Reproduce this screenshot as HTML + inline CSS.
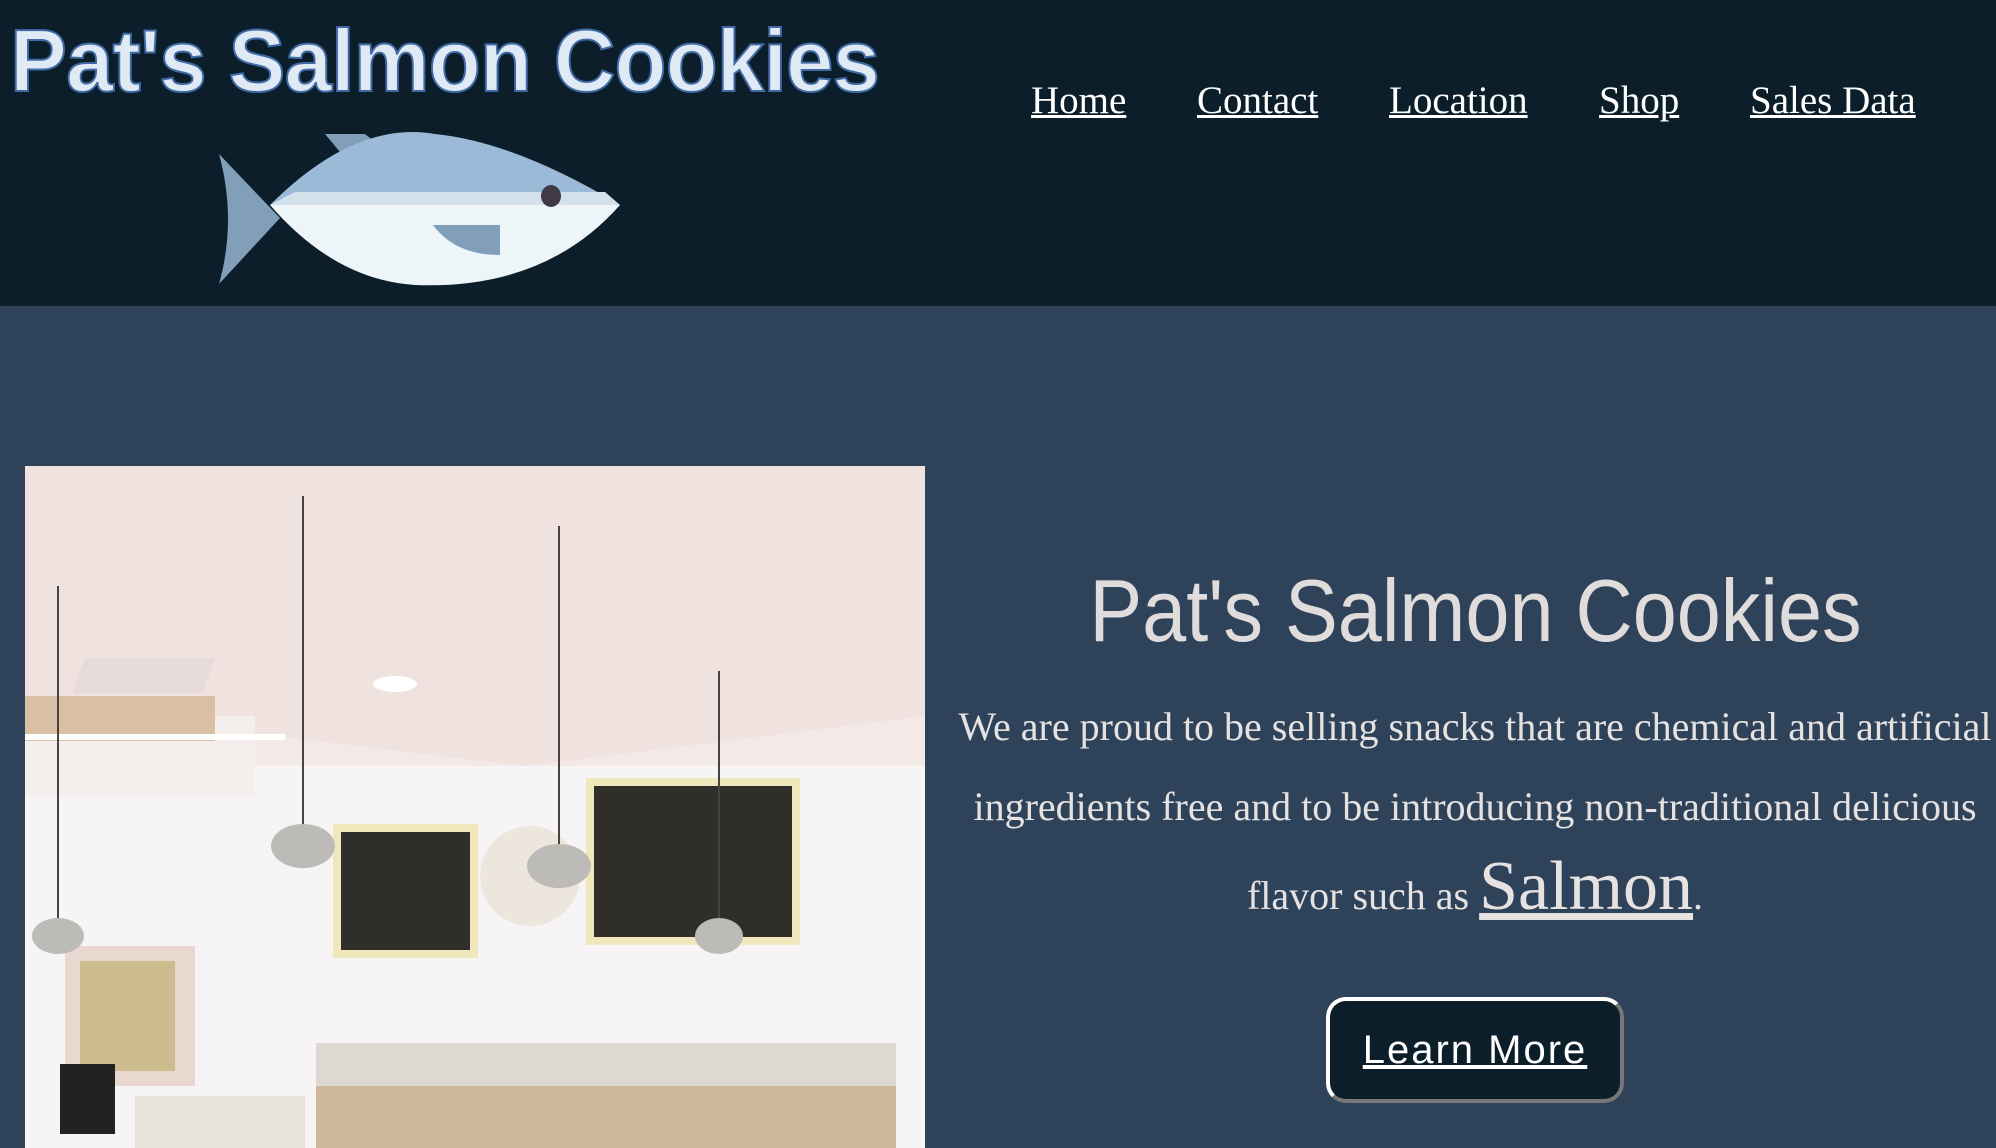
<!DOCTYPE html>
<html><head><style>
html,body{margin:0;padding:0}
body{width:1996px;height:1148px;overflow:hidden;background:#2e4259;position:relative;font-family:"Liberation Serif",serif}
header{position:absolute;left:0;top:0;width:1996px;height:306px;background:#0b1e2a}
.logo{position:absolute;left:10px;top:10px;font-family:"Liberation Sans",sans-serif;font-weight:bold;font-size:88px;color:#dfeaf5;-webkit-text-stroke:2px #3f6aa5;letter-spacing:-1px;white-space:nowrap;transform:scaleX(0.97);transform-origin:left}
nav a{position:absolute;top:78px;color:#fff;font-size:39px;text-decoration:underline;font-family:"Liberation Serif",serif}
h1{position:absolute;left:940px;width:1071px;top:560px;margin:0;text-align:center;font-family:"Liberation Sans",sans-serif;font-weight:normal;font-size:88px;color:#e1dcdc;transform:scaleX(0.9);white-space:nowrap}
p{position:absolute;left:900px;width:1150px;top:687px;margin:0;text-align:center;color:#e6e2e2;font-size:40px;line-height:80px;white-space:nowrap}
p a{color:#e6e2e2;font-size:70px;text-decoration:underline}
.btn{position:absolute;left:1326px;top:997px;width:298px;height:106px;box-sizing:border-box;background:#0b1e2a;border:4px solid #fff;border-right-color:#777;border-bottom-color:#777;border-radius:20px;color:#fff;font-family:"Liberation Sans",sans-serif;font-size:40px;text-align:center;line-height:98px;text-decoration:underline;letter-spacing:2px}
</style></head><body>
<header>
<div class="logo">Pat's Salmon Cookies</div>
<svg style="position:absolute;left:215px;top:130px" width="410" height="160" viewBox="0 0 410 160">
<polygon points="110,4 140,40 180,28 150,4" fill="#829fba"/>
<path d="M4,24 L65,88 L4,154 Q22,90 4,24Z" fill="#829fba"/>
<path d="M55,75 Q140,-10 220,4 Q300,12 405,75 Z" fill="#9bbad8"/>
<path d="M55,75 L405,75 Q330,160 200,155 Q120,150 55,75Z" fill="#eef5f9"/>
<path d="M55,75 L80,62 L390,62 L405,75Z" fill="#d3e1ea"/>
<ellipse cx="336" cy="66" rx="10" ry="11" fill="#3f3a45"/>
<path d="M218,95 L285,95 L285,125 Q240,125 218,95Z" fill="#829fba"/>
</svg>
<nav>
<a style="left:1031px">Home</a>
<a style="left:1197px">Contact</a>
<a style="left:1389px">Location</a>
<a style="left:1599px">Shop</a>
<a style="left:1750px">Sales Data</a>
</nav>
</header>
<svg style="position:absolute;left:25px;top:466px" width="900" height="682" viewBox="0 0 900 682">
<rect width="900" height="682" fill="#f3eae8"/>
<path d="M0,0 H900 V250 L500,300 L0,240Z" fill="#efe2df"/>
<rect x="0" y="300" width="900" height="382" fill="#f6f4f4"/>
<rect x="0" y="250" width="230" height="80" fill="#f4efec"/>
<rect x="0" y="230" width="190" height="45" fill="#d9bfa3"/>
<rect x="0" y="268" width="260" height="6" fill="#fff"/>
<rect x="308" y="358" width="145" height="134" fill="#f1e7bd"/>
<rect x="316" y="366" width="129" height="118" fill="#2f2e2b"/>
<rect x="561" y="312" width="214" height="167" fill="#f1e7bd"/>
<rect x="569" y="320" width="198" height="151" fill="#2f2e2b"/>
<circle cx="505" cy="410" r="50" fill="#ede6dd"/>
<rect x="40" y="480" width="130" height="140" fill="#e9d8d0"/>
<rect x="55" y="495" width="95" height="110" fill="#cdbc8e"/>
<g stroke="#444" stroke-width="2">
<line x1="33" y1="120" x2="33" y2="470"/><line x1="278" y1="30" x2="278" y2="380"/>
<line x1="534" y1="60" x2="534" y2="400"/><line x1="694" y1="205" x2="694" y2="470"/></g>
<g fill="#bdbbb8"><ellipse cx="33" cy="470" rx="26" ry="18"/><ellipse cx="278" cy="380" rx="32" ry="22"/><ellipse cx="534" cy="400" rx="32" ry="22"/><ellipse cx="694" cy="470" rx="24" ry="18"/></g>
<rect x="130" y="192" width="130" height="35" fill="#e6dada" transform="skewX(-20)"/>
<ellipse cx="370" cy="218" rx="22" ry="8" fill="#fff"/>
<rect x="291" y="577" width="580" height="105" fill="#ddd8d2"/>
<rect x="291" y="620" width="580" height="62" fill="#cfb89c"/>
<rect x="35" y="598" width="55" height="70" fill="#222"/>
<rect x="110" y="630" width="170" height="52" fill="#e8e2dc"/>
</svg>
<h1>Pat's Salmon Cookies</h1>
<p>We are proud to be selling snacks that are chemical and artificial<br>ingredients free and to be introducing non-traditional delicious<br>flavor such as <a>Salmon</a>.</p>
<div class="btn">Learn More</div>
</body></html>
